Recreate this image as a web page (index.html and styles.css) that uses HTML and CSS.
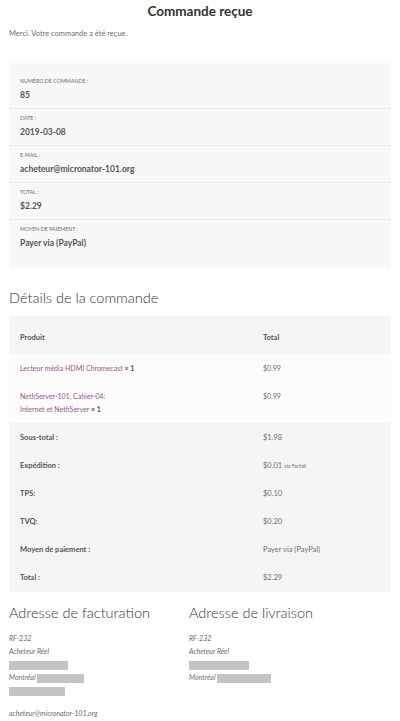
FILE: index.html
```html
<!DOCTYPE html>
<html lang="fr">
<head>
  <meta charset="UTF-8">
  <title>Commande reçue</title>
  <link rel="stylesheet" href="styles.css">
</head>
<body>
  <h1 class="page-title">Commande reçue</h1>
  <p class="thanks">Merci. Votre commande a été reçue.</p>

  <div class="overview">
    <div class="zig-top"></div>
    <ul class="overview-list">
      <li><span class="label">Numéro de commande :</span><strong>85</strong></li>
      <li><span class="label">Date :</span><strong>2019-03-08</strong></li>
      <li><span class="label">E-mail :</span><strong>acheteur@micronator-101.org</strong></li>
      <li><span class="label">Total :</span><strong>$2.29</strong></li>
      <li><span class="label">Moyen de paiement :</span><strong>Payer via (PayPal)</strong></li>
    </ul>
    <div class="zig-bottom"></div>
  </div>

  <h2 class="section-title">Détails de la commande</h2>
  <table class="order-table">
    <thead>
      <tr><th class="col-product">Produit</th><th>Total</th></tr>
    </thead>
    <tbody>
      <tr>
        <td><a href="#">Lecteur média HDMI Chromecast</a> <strong>× 1</strong></td>
        <td>$0.99</td>
      </tr>
      <tr>
        <td><a href="#">NethServer-101, Cahier-04:<br>Internet et NethServer</a> <strong>× 1</strong></td>
        <td>$0.99</td>
      </tr>
    </tbody>
    <tfoot>
      <tr><th>Sous-total :</th><td>$1.98</td></tr>
      <tr><th>Expédition :</th><td>$0.01 <small>via Forfait</small></td></tr>
      <tr><th>TPS:</th><td>$0.10</td></tr>
      <tr><th>TVQ:</th><td>$0.20</td></tr>
      <tr><th>Moyen de paiement :</th><td>Payer via (PayPal)</td></tr>
      <tr><th>Total :</th><td>$2.29</td></tr>
    </tfoot>
  </table>

  <div class="addresses">
    <div class="address-col">
      <h2 class="section-title">Adresse de facturation</h2>
      <address>
        RF-232<br>
        Acheteur Réel<br>
        <span class="redact" style="width:59px"></span><br>
        Montréal <span class="redact" style="width:47px"></span><br>
        <span class="redact" style="width:56px"></span>
      </address>
      <p class="email">acheteur@micronator-101.org</p>
    </div>
    <div class="address-col">
      <h2 class="section-title">Adresse de livraison</h2>
      <address>
        RF-232<br>
        Acheteur Réel<br>
        <span class="redact" style="width:60px"></span><br>
        Montréal <span class="redact" style="width:54px"></span>
      </address>
    </div>
  </div>
</body>
</html>
```

FILE: styles.css
```css
body { margin: 0; padding: 0 9px; background: #fff; color: #6d6d6d; font-family: Lato, "Open Sans", sans-serif; font-size: 7.5px; line-height: 13px; }
a { color: #96588a; text-decoration: none; }

.page-title { margin: 0; font-size: 13.5px; line-height: 22px; font-weight: 700; color: #333; text-align: center; }
.thanks { margin: 6px 0 22px; font-size: 7.5px; line-height: 12px; }

.overview { margin-bottom: 18px; }
.zig-top, .zig-bottom { height: 5px; background-size: 8px 5px; background-repeat: repeat-x; }
.zig-top { background-image: conic-gradient(from 122deg at 50% 0, #f8f8f8 116deg, transparent 0); }
.zig-bottom { background-image: conic-gradient(from -58deg at 50% 100%, #f8f8f8 116deg, transparent 0); }
.overview-list { list-style: none; margin: 0; padding: 5px 0 8px; background: #f8f8f8; }
.overview-list li { padding: 4px 11px 6px; border-bottom: 1px solid #ececec; }
.overview-list li:last-child { border-bottom: none; }
.overview-list .label { display: block; font-size: 5.3px; line-height: 10px; text-transform: uppercase; margin-bottom: 2px; }
.overview-list strong { display: block; font-size: 8.5px; line-height: 14px; color: #555; }

.section-title { margin: 0; font-size: 14.5px; line-height: 22px; font-weight: 300; color: #333; }
.order-table { width: 100%; border-collapse: collapse; margin-top: 7px; }
.order-table th, .order-table td { text-align: left; padding: 7px 11px; line-height: 14px; vertical-align: top; }
.order-table th { font-weight: 700; }
.order-table .col-product { width: 221px; }
.order-table thead th { background: #f5f5f5; padding: 15px 11px 9px; color: #555; }
.order-table tbody td { background: #fcfcfc; padding: 8px 11px 7px; line-height: 13px; font-size: 7px; }
.order-table tbody strong { color: #555; }
.order-table tfoot th, .order-table tfoot td { background: #f5f5f5; }
.order-table tfoot tr:first-child th, .order-table tfoot tr:first-child td { padding-top: 8px; }
.order-table tfoot th { color: #555; }
.order-table small { font-size: 5px; }

.addresses { display: flex; margin-top: 10px; }
.address-col { width: 180px; }
address { margin-top: 8px; font-style: italic; font-size: 7px; line-height: 13px; }
.redact { display: inline-block; height: 9px; vertical-align: middle; background: #c4c4c4; }
.email { margin: 10px 0 0; font-style: italic; font-size: 7px; line-height: 13px; }
```
